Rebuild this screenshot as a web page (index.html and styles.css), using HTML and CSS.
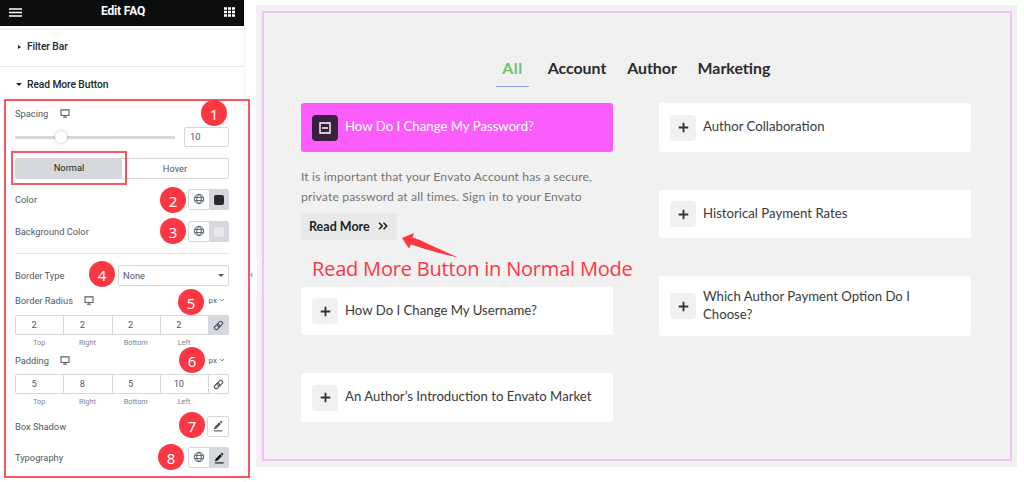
FILE: index.html
```html
<!DOCTYPE html>
<html lang="en">
<head>
  <meta charset="UTF-8">
  <meta name="viewport" content="width=device-width, initial-scale=1.0">
  <title>Edit FAQ</title>
  <link rel="stylesheet" href="styles.css">
</head>
<body>
  <!-- shared icons -->
  <svg class="sprite" width="0" height="0">
    <symbol id="desktop" viewBox="0 0 10 9">
      <path d="M1 .9h8v5.6H1zM3 8.200h4M5 6.500v1.700" fill="none" stroke="#556068" stroke-width="1.100"/>
    </symbol>
    <symbol id="globe" viewBox="0 0 12 12">
      <path d="M6 1.300a4.700 4.700 0 1 0 0 9.400a4.700 4.700 0 1 0 0-9.400zM6 1.300C3 3.500 3 8.500 6 10.700C9 8.500 9 3.500 6 1.300zM1.800 4.400h8.400M1.800 7.600h8.400" fill="none" stroke="#556068" stroke-width="1"/>
    </symbol>
    <symbol id="link" viewBox="0 0 12 12">
      <g fill="none" stroke="currentColor" stroke-width="1.300" transform="rotate(-45 6 6)">
        <rect x="0.500" y="4" width="6.500" height="4" rx="2"/>
        <rect x="5" y="4" width="6.500" height="4" rx="2"/>
      </g>
    </symbol>
    <symbol id="pencil" viewBox="0 0 12 12">
      <path d="M2 9.200l.5-2.300L7.200 2.200l1.800 1.800-4.700 4.700zM7.800 1.600l.6-.6q.4-.3.8 0l1 1q.3.4 0 .8l-.6.6z" fill="currentColor"/>
      <path d="M2 10.900h8.600" stroke="currentColor" stroke-width="1.100"/>
    </symbol>
    <symbol id="chevron" viewBox="0 0 6 4">
      <path d="M1 1l2 1.800L5 1" fill="none" stroke="#6d7882" stroke-width=".9"/>
    </symbol>
    <symbol id="plus" viewBox="0 0 12 12">
      <path d="M6 .8v10.400M.8 6h10.400" stroke="#333" stroke-width="2"/>
    </symbol>
  </svg>

  <aside class="panel">
    <header class="panel-header">
      <svg width="13" height="9" viewBox="0 0 13 9"><path d="M0 1h13M0 4.500h13M0 8h13" stroke="#fff" stroke-width="1.600"/></svg>
      <h1 class="panel-title">Edit FAQ</h1>
      <svg width="11" height="10" viewBox="0 0 11 10"><path d="M0 1.500h11M0 5h11M0 8.500h11" stroke="#fff" stroke-width="2.600" stroke-dasharray="3 1"/></svg>
    </header>
    <div class="section section-closed"><span class="caret-right"></span>Filter Bar</div>
    <div class="section"><span class="caret-down"></span>Read More Button</div>

    <div class="controls">
      <div class="row spacing-label">Spacing <svg class="device" width="10" height="9"><use href="#desktop"/></svg></div>
      <div class="row slider-row">
        <div class="slider"><span class="slider-knob"></span></div>
        <div class="number-box">10</div>
      </div>
      <div class="row tabs">
        <div class="tab tab-active">Normal</div>
        <div class="tab">Hover</div>
      </div>
      <div class="row color-row">
        <span>Color</span>
        <div class="buttons">
          <span class="btn"><svg width="12" height="12"><use href="#globe"/></svg></span>
          <span class="btn btn-on"><i class="swatch swatch-dark"></i></span>
        </div>
      </div>
      <div class="row background-row">
        <span>Background Color</span>
        <div class="buttons">
          <span class="btn"><svg width="12" height="12"><use href="#globe"/></svg></span>
          <span class="btn btn-on"><i class="swatch swatch-light"></i></span>
        </div>
      </div>
      <div class="divider"></div>
      <div class="row border-row">
        <span>Border Type</span>
        <div class="select">None<span class="caret-down"></span></div>
      </div>
      <div class="row radius-label">
        <span>Border Radius <svg class="device" width="10" height="9"><use href="#desktop"/></svg></span>
        <span class="unit">px <svg width="6" height="4"><use href="#chevron"/></svg></span>
      </div>
      <div class="dimensions">
        <span>2</span><span>2</span><span>2</span><span>2</span>
        <span class="link link-on"><svg width="11" height="11"><use href="#link"/></svg></span>
      </div>
      <div class="dimension-names"><span>Top</span><span>Right</span><span>Bottom</span><span>Left</span></div>
      <div class="row padding-label">
        <span>Padding <svg class="device" width="10" height="9"><use href="#desktop"/></svg></span>
        <span class="unit">px <svg width="6" height="4"><use href="#chevron"/></svg></span>
      </div>
      <div class="dimensions">
        <span>5</span><span>8</span><span>5</span><span>10</span>
        <span class="link"><svg width="11" height="11"><use href="#link"/></svg></span>
      </div>
      <div class="dimension-names"><span>Top</span><span>Right</span><span>Bottom</span><span>Left</span></div>
      <div class="row shadow-row">
        <span>Box Shadow</span>
        <div class="buttons"><span class="btn"><svg width="12" height="12"><use href="#pencil"/></svg></span></div>
      </div>
      <div class="row typography-row">
        <span>Typography</span>
        <div class="buttons">
          <span class="btn"><svg width="12" height="12"><use href="#globe"/></svg></span>
          <span class="btn btn-on btn-edit"><svg width="12" height="12"><use href="#pencil"/></svg></span>
        </div>
      </div>
    </div>
  </aside>

  <main class="preview">
    <div class="faq">
      <nav class="filters">
        <span class="filter filter-all">All</span>
        <span class="filter filter-account">Account</span>
        <span class="filter filter-author">Author</span>
        <span class="filter filter-marketing">Marketing</span>
      </nav>
      <div class="columns">
        <div class="column">
          <div class="card card-open">
            <span class="toggle"><svg width="12" height="12" viewBox="0 0 12 12"><path d="M1 1h10v10H1zM3 6h6" fill="none" stroke="#fff" stroke-width="1.400"/></svg></span>
            <span class="question">How Do I Change My Password?</span>
          </div>
          <div class="answer">
            <p class="answer-text">It is important that your Envato Account has a secure,<br>private password at all times. Sign in to your Envato</p>
            <span class="read-more"><span>Read More</span> <svg width="10" height="8" viewBox="0 0 10 8"><path d="M1 .7L4.200 4L1 7.300M5.500 .7L8.700 4L5.500 7.300" fill="none" stroke="#222" stroke-width="1.600"/></svg></span>
          </div>
          <div class="card card-short">
            <span class="toggle"><svg width="11" height="11"><use href="#plus"/></svg></span>
            <span class="question">How Do I Change My Username?</span>
          </div>
          <div class="card">
            <span class="toggle"><svg width="11" height="11"><use href="#plus"/></svg></span>
            <span class="question">An Author’s Introduction to Envato Market</span>
          </div>
        </div>
        <div class="column">
          <div class="card">
            <span class="toggle"><svg width="11" height="11"><use href="#plus"/></svg></span>
            <span class="question">Author Collaboration</span>
          </div>
          <div class="card card-short">
            <span class="toggle"><svg width="11" height="11"><use href="#plus"/></svg></span>
            <span class="question">Historical Payment Rates</span>
          </div>
          <div class="card card-tall">
            <span class="toggle"><svg width="11" height="11"><use href="#plus"/></svg></span>
            <span class="question">Which Author Payment Option Do I<br>Choose?</span>
          </div>
        </div>
      </div>
    </div>
  </main>

  <!-- annotations over the editor -->
  <div class="collapse">‹</div>
  <div class="frame frame-controls"></div>
  <div class="frame frame-normal"></div>
  <span class="badge badge-1">1</span>
  <span class="badge badge-2">2</span>
  <span class="badge badge-3">3</span>
  <span class="badge badge-4">4</span>
  <span class="badge badge-5">5</span>
  <span class="badge badge-6">6</span>
  <span class="badge badge-7">7</span>
  <span class="badge badge-8">8</span>
  <svg class="arrow" width="58" height="26" viewBox="0 0 58 26"><path d="M0 5L12 0L10.500 4.500C18 7 21 8 24 10L56 24.500C42 21.500 30 18 20 15L9 11.500L7 15.500z" fill="#fc3744"/></svg>
  <div class="note">Read More Button in Normal Mode</div>
</body>
</html>
```
FILE: styles.css
```css
* {
  --red: #fc3744;
  --line: #d5d8dc;
  --label: #515962;
  box-sizing: border-box;
}
body {
  position: relative;
  width: 1024px;
  height: 482px;
  margin: 0;
  overflow: hidden;
  display: flex;

  background-color: #fff;
  font-family: Roboto, "Liberation Sans", sans-serif;
}
svg {
  flex: none;
}
.sprite {
  position: absolute;
}

/* editor panel */
.panel {
  width: 245px;
  height: 482px;
  border-right: 1px solid #f3f3f4;

  color: var(--label);
  font-size: 9.3px;
}
.panel-header {
  height: 26px;
  padding: 0 9px 5px 9px;
  display: flex;
  align-items: center;
  justify-content: space-between;

  background-color: #0c0d0e;
}
.panel-header svg {
  margin-top: 3px;
}
.panel-title {
  margin: 0;

  color: #fff;
  font-size: 12px;
  font-weight: 700;
  letter-spacing: -0.15px;
}
.section {
  height: 36px;
  padding: 0 0 2px 16px;
  display: flex;
  align-items: center;

  color: #222529;
  font-size: 10.3px;
  font-weight: 500;
  letter-spacing: -0.1px;
}
.section-closed {
  height: 41px;
  padding-top: 3px;
  border-bottom: 1px solid #e9eaeb;

  background: linear-gradient(#fff 2px, #f3f3f4 2px, #f3f3f4 4px, #fff 4px);
}
.caret-right {
  margin: 0 6px 0 2px;
  border: solid transparent;
  border-width: 2.5px 0 2.5px 3px;
  border-left-color: #222;
}
.caret-down {
  margin-right: 5px;
  border: solid transparent;
  border-width: 3px 3px 0;
  border-top-color: #222;
}

.controls {
  width: 214px;
  margin-left: 15px;
}
.row {
  height: 21px;
  display: flex;
  align-items: center;
  justify-content: space-between;
}
.device {
  margin-left: 9px;
  vertical-align: -1px;
}
.spacing-label {
  height: 20px;
  justify-content: flex-start;
}
.spacing-label .device {
  margin-left: 12px;
}
.slider-row {
  height: 20px;
  margin-top: 4px;
}
.slider {
  width: 160px;
  height: 3px;

  background-color: var(--line);
}
.slider-knob {
  display: block;
  width: 12px;
  height: 12px;
  margin: -5px 0 0 40px;
  border-radius: 50%;

  background-color: #fff;
  box-shadow: 0 0 3px rgba(0, 0, 0, 0.3);
}
.number-box {
  width: 45px;
  height: 20px;
  padding-left: 5px;
  border: 1px solid var(--line);
  border-radius: 2px;

  line-height: 18px;
}
.tabs {
  margin-top: 11px;
  border: 1px solid var(--line);
  border-radius: 2px;
}
.tab {
  width: 50%;
  text-align: center;
  line-height: 18px;
}
.tab-active {
  height: 19px;

  background-color: var(--line);
  color: #1f2124;
}
.color-row {
  margin-top: 10px;
}
.background-row {
  margin-top: 11px;
}
.buttons {
  height: 21px;
  border: 1px solid var(--line);
  border-radius: 2px;
  display: flex;
}
.btn {
  width: 20px;
  padding-bottom: 1px;
  display: flex;
  align-items: center;
  justify-content: center;
}
.btn-on {
  width: 19px;
  padding-bottom: 0;
  background-color: var(--line);
}
.btn-edit {
  color: #0c0d0e;
}
.swatch {
  width: 10px;
  height: 10px;
  border-radius: 2px;
}
.swatch-dark {
  background-color: #2a2a2a;
}
.swatch-light {
  background-color: #e9e9e9;
}
.divider {
  height: 1px;
  margin-top: 11px;

  background-color: #e2e4e7;
}
.border-row {
  margin-top: 11px;
}
.select {
  width: 111px;
  height: 21px;
  padding-left: 4px;
  border: 1px solid var(--line);
  border-radius: 2px;
  display: flex;
  align-items: center;
  justify-content: space-between;
}
.select .caret-down {
  margin-right: 4px;
  border-top-color: var(--label);
}
.radius-label {
  height: 20px;
  margin-top: 4px;
}
.padding-label {
  height: 20px;
  margin-top: 2px;
}
.unit {
  margin-right: 4px;
  font-size: 8px;
}
.unit svg {
  vertical-align: 1px;
}
.dimensions {
  height: 20px;
  margin-top: 5px;
  border: 1px solid var(--line);
  border-radius: 2px;
  display: flex;

  line-height: 18px;
}
.padding-label + .dimensions {
  margin-top: 4px;
}
.dimensions span {
  width: 48.3px;
  padding-right: 11px;
  border-right: 1px solid var(--line);
  text-align: center;
}
.dimensions .link {
  width: 19px;
  padding: 0;
  border: 0;
  display: flex;
  align-items: center;
  justify-content: center;
}
.dimensions .link-on {
  background-color: var(--line);
}
.dimension-names {
  height: 12px;
  margin-top: 1px;
  display: flex;

  color: #7c858e;
  font-size: 7.3px;
  line-height: 13px;
}
.dimension-names span {
  width: 48.3px;
  text-align: center;
}
.shadow-row {
  margin-top: 9px;
}
.typography-row {
  margin-top: 10px;
}

/* page preview */
.preview {
  width: 761px;
  height: 462px;
  margin: 5px 0 0 11px;
  padding: 6px 5px 6px 6px;

  background-color: #f1f1f1;
}
.faq {
  height: 100%;
  padding: 37px 39px 0 37px;
  border: 2px solid #f4bdfc;

  color: #3a3a3a;
  font-family: Lato, "Noto Sans", sans-serif;
}
.filters {
  height: 37px;
  display: flex;
  justify-content: center;
  gap: 9px;
}
.filter {
  height: 36px;

  background-color: #f0f0f0;
  color: #2b2b2b;
  font-size: 15.9px;
  font-weight: 700;
  line-height: 35px;
  text-align: center;
}
.filter-all {
  width: 33px;
  height: 37px;
  margin-right: 4px;
  border-bottom: 1px solid #8ea4ea;
  color: #6cc069;
  letter-spacing: 0.6px;
}
.filter-account {
  width: 70px;
}
.filter-author {
  width: 62px;
}
.filter-marketing {
  width: 84px;
}
.columns {
  margin-top: 16px;
  display: flex;
  justify-content: space-between;
}
.column {
  width: 312px;
}
.card {
  height: 49px;
  margin-bottom: 38px;
  padding: 0 11px;
  border-radius: 3px;
  display: flex;
  align-items: center;
  gap: 7px;

  background-color: #fff;
}
.card-open {
  margin-bottom: 0;

  background-color: #fb5dfc;
  color: #fff;
}
.card-short {
  height: 48px;
}
.card-tall {
  height: 60px;
}
.toggle {
  width: 26px;
  height: 26px;
  border-radius: 4px;
  display: flex;
  align-items: center;
  justify-content: center;
  flex: none;

  background-color: #f1f1f1;
}
.card-open .toggle {
  background-color: #38213c;
}
.question {
  padding-bottom: 1px;
  font-size: 13.2px;
  line-height: 17.5px;
  white-space: nowrap;
}
.answer {
  height: 135px;
  padding-top: 15px;
}
.answer-text {
  margin: 0 0 7px;

  color: #747474;
  font-size: 12.2px;
  letter-spacing: 0.12px;
  line-height: 19.5px;
  white-space: nowrap;
}
.read-more {
  width: 96px;
  height: 27px;
  padding: 0 9px 1px 8px;
  border-radius: 2px;
  display: flex;
  align-items: center;
  justify-content: space-between;

  background-color: #e8e8e8;
  color: #222;
  font-size: 12.5px;
  font-weight: 700;
}

/* annotations */
.collapse {
  position: absolute;
  top: 258px;
  left: 246px;
  width: 11px;
  height: 38px;

  background-color: #fff;
  color: #556068;
  font-size: 10px;
  line-height: 33px;
  text-align: center;
}
.frame {
  position: absolute;
  border: 2px solid rgba(252, 55, 68, 0.85);
}
.frame-controls {
  top: 99px;
  left: 4px;
  width: 246px;
  height: 379px;
}
.frame-normal {
  top: 151px;
  left: 11px;
  width: 116px;
  height: 34px;
}
.badge {
  position: absolute;
  width: 26px;
  height: 26px;
  border-radius: 50%;

  background-color: var(--red);
  color: #fff;
  font-family: "Noto Sans", "Open Sans", sans-serif;
  font-size: 15px;
  line-height: 28px;
  text-align: center;
}
.badge-1 {
  top: 100px;
  left: 201px;
}
.badge-2 {
  top: 187px;
  left: 160px;
}
.badge-3 {
  top: 218px;
  left: 160px;
}
.badge-4 {
  top: 261px;
  left: 89px;
}
.badge-5 {
  top: 289px;
  left: 178px;
}
.badge-6 {
  top: 347px;
  left: 179px;
}
.badge-7 {
  top: 412px;
  left: 179px;
}
.badge-8 {
  top: 444px;
  left: 158px;
}
.arrow {
  position: absolute;
  top: 233px;
  left: 402px;
}
.note {
  position: absolute;
  top: 255px;
  left: 312px;

  color: var(--red);
  font-family: "Open Sans", "Noto Sans", sans-serif;
  font-size: 20px;
  letter-spacing: -0.2px;
  line-height: 28px;
  white-space: nowrap;
}
```
